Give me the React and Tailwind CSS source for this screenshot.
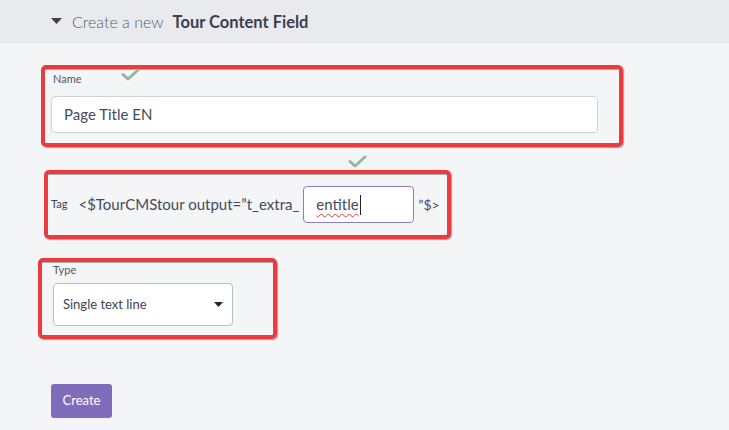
import React from 'react';

function Check({ className }) {
  return (
    <svg className={className} width="19" height="13" viewBox="0 0 19 13" fill="none">
      <path d="M2 6.5l5 4.5L17 2" stroke="#93b99c" strokeWidth="3" strokeLinecap="round" strokeLinejoin="round" />
    </svg>
  );
}

function Annot({ className, children }) {
  return (
    <div className={`relative border-4 border-[#ec3b3f] rounded-[5px] shadow-[1px_1px_1px_rgba(0,0,0,0.35),inset_0_1px_0_rgba(0,0,0,0.3)] ${className}`}>
      {children}
    </div>
  );
}

export default function App() {
  return (
    <div className="w-[729px] h-[430px] bg-[#f4f5f7] overflow-hidden font-['Lato','Noto_Sans',sans-serif] text-[#444a5c]">
      {/* Header */}
      <div className="h-[43px] bg-[#e9eaed] flex items-center pl-[51px] pt-[1px]">
        <svg width="11" height="7" viewBox="0 0 11 7" className="mr-[10px] mt-[-1px]">
          <path d="M0 0h11L5.5 6z" fill="#3d4150" />
        </svg>
        <span className="text-[16px] text-[#5a5f70] font-light">Create a new</span>
        <span className="text-[16.5px] font-bold text-[#3a3e50] ml-[9px]">Tour Content Field</span>
      </div>

      {/* Name */}
      <Annot className="ml-[41px] mt-[22px] w-[582px] h-[82px] pl-[8px] pt-[3px]">
        <div className="text-[11px] text-[#505566] leading-[14px]">Name</div>
        <Check className="absolute left-[76px] top-[-1px]" />
        <div className="mt-[10px] ml-[-2px] w-[547px] h-[37px] bg-white border border-[#cfd2da] rounded-[4px] flex items-center pl-[12px] text-[15px] text-[#454a5c]">
          Page Title EN
        </div>
      </Annot>

      {/* Tag */}
      <div className="relative">
        <Check className="absolute left-[348px] top-[8px]" />
      </div>
      <Annot className="ml-[44px] mt-[23px] w-[407px] h-[69px] flex items-center pl-[3px]">
        <span className="text-[11px] text-[#3c4050]">Tag</span>
        <span className="ml-[11px] text-[15px] text-[#444a5c]">&lt;$TourCMStour output=”t_extra_</span>
        <div className="ml-[4px] w-[111px] h-[37px] bg-white border border-[#8c7bc8] rounded-[4px] flex items-center pl-[12px] text-[15px] text-[#454a5c]">
          <span className="underline decoration-wavy decoration-[#e0383d] decoration-1 underline-offset-[3px]">entitle</span>
          <span className="w-px h-[20px] bg-[#222] ml-[1px]" />
        </div>
        <span className="ml-[4px] text-[14px] text-[#444a5c]">”$&gt;</span>
      </Annot>

      {/* Type */}
      <Annot className="ml-[38px] mt-[19px] w-[239px] h-[81px] pl-[11px] pt-[1px]">
        <div className="text-[11px] text-[#505566] leading-[14px]">Type</div>
        <div className="mt-[6px] w-[180px] h-[43px] bg-white border border-[#b9bcc6] rounded-[4px] flex items-center justify-between pl-[9px] pr-[9px] text-[13px] text-[#3d4252]">
          <span>Single text line</span>
          <svg width="9" height="5" viewBox="0 0 9 5">
            <path d="M0 0h9L4.5 5z" fill="#23262e" />
          </svg>
        </div>
      </Annot>

      {/* Create */}
      <button className="ml-[51px] mt-[45px] w-[61px] h-[34px] bg-[#7f6dbb] rounded-[3px] text-white text-[13px] flex items-center justify-center">
        Create
      </button>
    </div>
  );
}
